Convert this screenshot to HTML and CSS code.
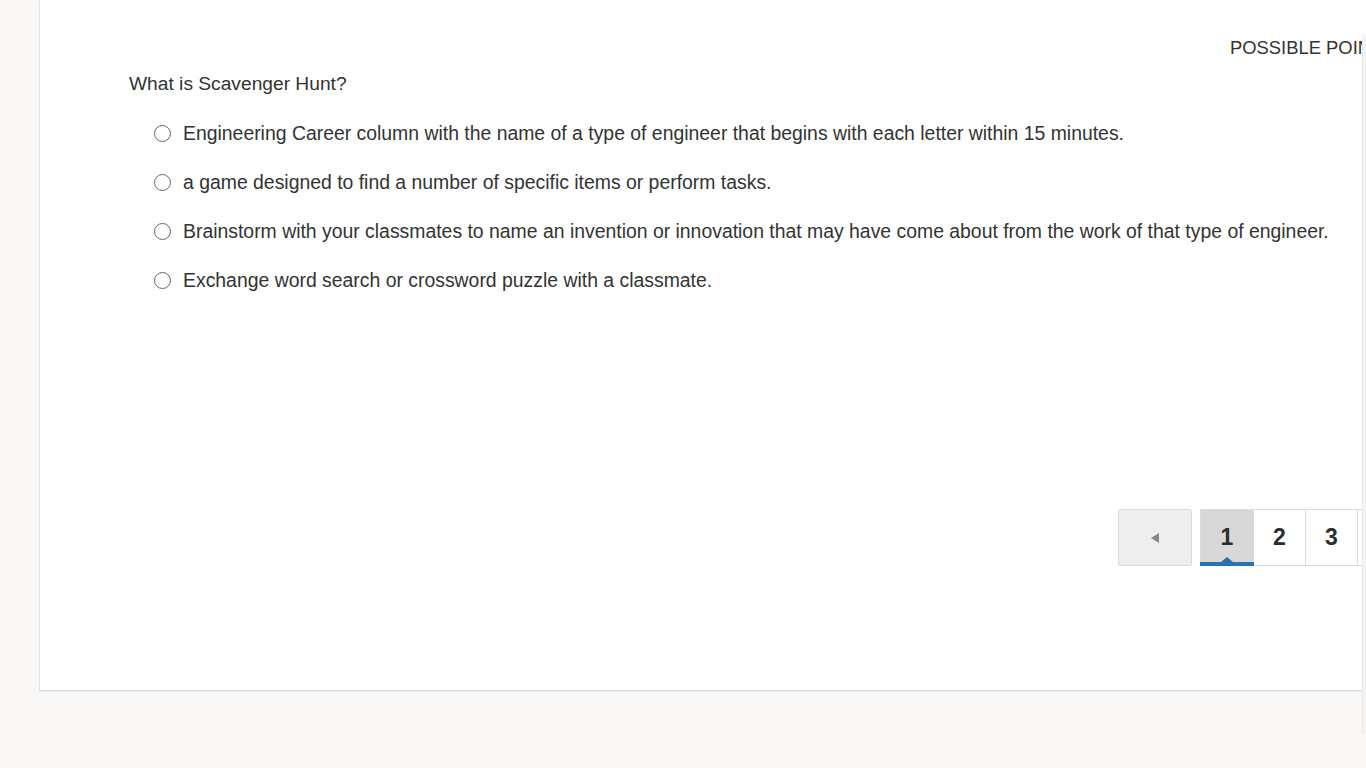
FILE: index.html
```html
<!DOCTYPE html>
<html lang="en">
<head>
<meta charset="utf-8">
<title>Quiz</title>
<link rel="stylesheet" href="styles.css">
</head>
<body>
<div class="page">
  <div class="card">
    <div class="points-row">POSSIBLE POINTS: 1</div>
    <div class="question">What is Scavenger Hunt?</div>
    <ul class="answers">
      <li class="answer"><span class="radio"></span><span>Engineering Career column with the name of a type of engineer that begins with each letter within 15 minutes.</span></li>
      <li class="answer"><span class="radio"></span><span>a game designed to find a number of specific items or perform tasks.</span></li>
      <li class="answer"><span class="radio"></span><span>Brainstorm with your classmates to name an invention or innovation that may have come about from the work of that type of engineer.</span></li>
      <li class="answer"><span class="radio"></span><span>Exchange word search or crossword puzzle with a classmate.</span></li>
    </ul>
    <nav class="pager">
      <button class="prev" aria-label="Previous"><svg width="10" height="12" viewBox="0 0 10 12"><path d="M9 1 L1 6 L9 11 Z" fill="#888"/></svg></button>
      <div class="pages">
        <button class="pg current">1</button>
        <button class="pg">2</button>
        <button class="pg">3</button>
        <button class="pg">4</button>
      </div>
    </nav>
  </div>
  <div class="edge"></div>
</div>
</body>
</html>
```

FILE: styles.css
```css
html, body {
  margin: 0;
  padding: 0;
  overflow: hidden;
  background: #f9f8f6;
  font-family: "Liberation Sans", Arial, sans-serif;
  color: #333;
}
.page {
  position: relative;
  width: 1366px;
  height: 768px;
  overflow: hidden;
}
.card {
  margin-left: 40px;
  width: 1420px;
  height: 690px;
  background: #fff;
  box-shadow: 0 1px 2px rgba(0,0,0,0.12), 0 0 0 1px rgba(0,0,0,0.04);
  box-sizing: border-box;
  padding-top: 37px;
}
.points-row {
  padding-left: 1190px;
  font-size: 18.4px;
  line-height: 22px;
  white-space: nowrap;
  color: #333;
}
.question {
  margin-top: 13px;
  padding-left: 89px;
  font-size: 19.2px;
  line-height: 24px;
}
.answers {
  list-style: none;
  margin: 13px 0 0;
  padding: 0 0 0 113px;
}
.answer {
  display: flex;
  align-items: center;
  gap: 12px;
  height: 49px;
  font-size: 19.4px;
  white-space: nowrap;
}
.radio {
  width: 15px;
  height: 15px;
  border: 1.5px solid #666;
  border-radius: 50%;
  flex: none;
  margin-left: 1px;
}
.pager {
  display: flex;
  margin-top: 204px;
  padding-left: 1078px;
  gap: 8px;
  align-items: flex-start;
}
.prev {
  width: 74px;
  height: 57px;
  background: #eeeeee;
  border: 1px solid #dcdcdc;
  border-radius: 2px;
  display: flex;
  align-items: center;
  justify-content: center;
  padding: 0;
}
.pages {
  display: flex;
}
.pg {
  width: 52px;
  height: 57px;
  background: #fff;
  border: 1px solid #dcdcdc;
  border-left: none;
  font-family: "Liberation Sans", Arial, sans-serif;
  font-weight: bold;
  font-size: 23px;
  color: #2d2d2d;
  padding: 0;
  position: relative;
}
.pg:first-child {
  border-left: 1px solid #dcdcdc;
  width: 54px;
}
.pg.current {
  background: #d8d8d8;
}
.pg.current::after {
  content: "";
  position: absolute;
  left: -1px;
  right: -1px;
  bottom: -1px;
  height: 4px;
  background: #2a73ad;
}
.pg.current::before {
  content: "";
  position: absolute;
  left: 50%;
  bottom: 3px;
  margin-left: -6px;
  border-left: 6px solid transparent;
  border-right: 6px solid transparent;
  border-bottom: 5px solid #2a73ad;
}
.edge {
  position: absolute;
  right: 0;
  top: 34px;
  width: 3px;
  height: 700px;
  background: #f4f3f1;
  border-left: 1px solid #e9e8e6;
}
```
